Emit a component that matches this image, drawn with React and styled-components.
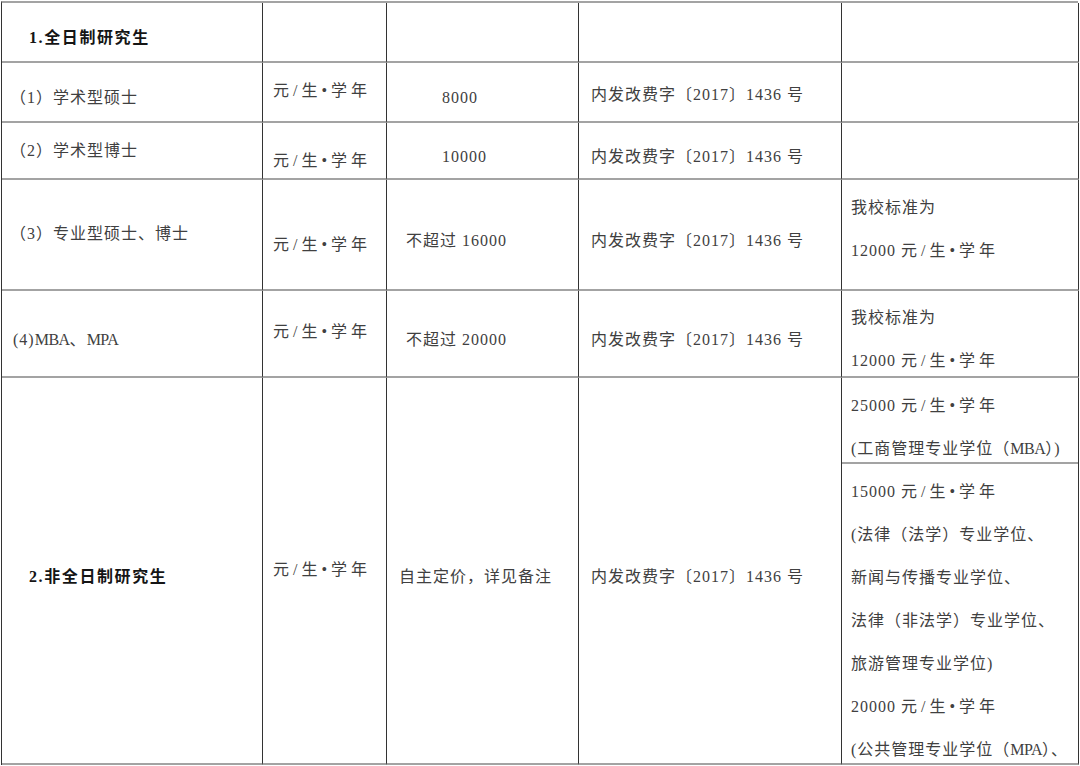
import React from "react";
import styled, { createGlobalStyle } from "styled-components";

const Global = createGlobalStyle`
  html, body {
    margin: 0;
    padding: 0;
    background: #ffffff;
    overflow: hidden;
  }
  body {
    font-family: "Liberation Serif", "Noto Sans CJK SC", serif;
  }
`;

const Table = styled.div`
  display: grid;
  grid-template-columns: 261px 124px 192px 263px 237px;
  grid-template-rows: 60px 60px 57px 111px 87px 387px;
  width: 1077px;
  margin: 1px 0 0 1px;
  border-left: 1px solid #333;
  border-top: 2px solid #a3a3a3;
  box-sizing: border-box;
`;

const Cell = styled.div`
  box-sizing: border-box;
  border-right: 1px solid #333;
  border-bottom: 2px solid #a3a3a3;
  padding: ${(p) => p.$pt || 0}px 0 0 ${(p) => p.$pl || 0}px;
  font-size: 16px;
  line-height: 20px;
  letter-spacing: ${(p) => (p.$bold ? "1.6px" : "1px")};
  color: ${(p) => (p.$bold ? "#151515" : "#404040")};
  font-weight: ${(p) => (p.$bold ? 700 : 400)};
  white-space: nowrap;
  overflow: hidden;
`;

const SplitCell = styled.div`
  box-sizing: border-box;
  border-right: 1px solid #333;
  border-bottom: 2px solid #a3a3a3;
  display: flex;
  flex-direction: column;
  overflow: hidden;
`;

const SubCell = styled.div`
  box-sizing: border-box;
  padding: ${(p) => p.$pt || 0}px 0 0 9px;
  height: ${(p) => (p.$h ? `${p.$h}px` : "auto")};
  flex: ${(p) => (p.$h ? "none" : "1")};
  border-bottom: ${(p) => (p.$divider ? "2px solid #a3a3a3" : "none")};
`;

const Lines = styled.div`
  display: flex;
  flex-direction: column;
  font-size: 16px;
  line-height: 43px;
  letter-spacing: 1px;
  color: #404040;
  white-space: nowrap;
`;

const Condensed = styled.span`
  letter-spacing: -0.5px;
`;

const UnitText = styled.span`
  letter-spacing: 4px;
`;

const Unit = () => <UnitText>元/生•学年</UnitText>;

const DOC = "内发改费字〔2017〕1436 号";

export default function App() {
  return (
    <>
      <Global />
      <Table>
        {/* Row 1 */}
        <Cell $pl={27} $pt={25} $bold>1.全日制研究生</Cell>
        <Cell />
        <Cell />
        <Cell />
        <Cell />

        {/* Row 2 */}
        <Cell $pl={8} $pt={25}>（1）学术型硕士</Cell>
        <Cell $pl={10} $pt={18}><Unit /></Cell>
        <Cell $pl={55} $pt={25}>8000</Cell>
        <Cell $pl={12} $pt={22}>{DOC}</Cell>
        <Cell />

        {/* Row 3 */}
        <Cell $pl={8} $pt={18}>（2）学术型博士</Cell>
        <Cell $pl={10} $pt={28}><Unit /></Cell>
        <Cell $pl={55} $pt={24}>10000</Cell>
        <Cell $pl={12} $pt={24}>{DOC}</Cell>
        <Cell />

        {/* Row 4 */}
        <Cell $pl={8} $pt={44}>（3）专业型硕士、博士</Cell>
        <Cell $pl={10} $pt={55}><Unit /></Cell>
        <Cell $pl={19} $pt={51}>不超过 16000</Cell>
        <Cell $pl={12} $pt={51}>{DOC}</Cell>
        <Cell $pl={9} $pt={6}>
          <Lines>
            <span>我校标准为</span>
            <span>12000 <Unit /></span>
          </Lines>
        </Cell>

        {/* Row 5 */}
        <Cell $pl={11} $pt={39}>
          (4)<Condensed>MBA</Condensed>、<Condensed>MPA</Condensed>
        </Cell>
        <Cell $pl={10} $pt={31}><Unit /></Cell>
        <Cell $pl={19} $pt={39}>不超过 20000</Cell>
        <Cell $pl={12} $pt={39}>{DOC}</Cell>
        <Cell $pl={9} $pt={5}>
          <Lines>
            <span>我校标准为</span>
            <span>12000 <Unit /></span>
          </Lines>
        </Cell>

        {/* Row 6 */}
        <Cell $pl={27} $pt={189} $bold>2.非全日制研究生</Cell>
        <Cell $pl={10} $pt={182}><Unit /></Cell>
        <Cell $pl={12} $pt={189}>自主定价，详见备注</Cell>
        <Cell $pl={12} $pt={189}>{DOC}</Cell>
        <SplitCell>
          <SubCell $h={86} $pt={6} $divider>
            <Lines>
              <span>25000 <Unit /></span>
              <span>
                (工商管理专业学位（<Condensed>MBA</Condensed>）)
              </span>
            </Lines>
          </SubCell>
          <SubCell $pt={6}>
            <Lines>
              <span>15000 <Unit /></span>
              <span>(法律（法学）专业学位、</span>
              <span>新闻与传播专业学位、</span>
              <span>法律（非法学）专业学位、</span>
              <span>旅游管理专业学位)</span>
              <span>20000 <Unit /></span>
              <span>
                (公共管理专业学位（<Condensed>MPA</Condensed>）、
              </span>
            </Lines>
          </SubCell>
        </SplitCell>
      </Table>
    </>
  );
}
